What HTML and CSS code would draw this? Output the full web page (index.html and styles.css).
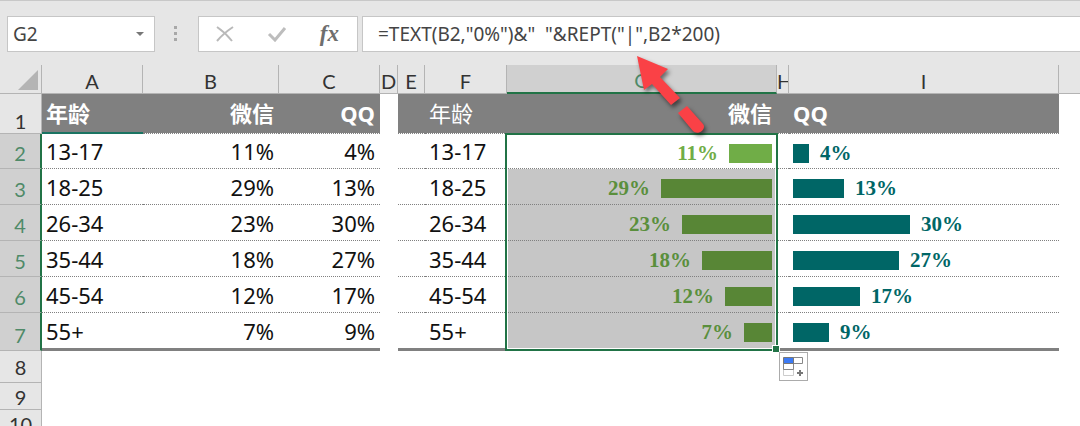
FILE: index.html
```
<!DOCTYPE html>
<html lang="zh-CN">
<head>
  <meta charset="UTF-8">
  <title>Excel</title>
  <link rel="stylesheet" href="styles.css">
</head>
<body>
  <div class="formula-bar">
    <div class="name-box">
      <input type="text" class="name-input" value="G2" aria-label="Name Box">
      <button type="button" class="name-drop" aria-label="Open name list">
        <svg width="8" height="4" viewBox="0 0 8 4"><path d="M0 0h8L4 4z" fill="#777"/></svg>
      </button>
    </div>
    <svg class="grip" width="4" height="16" viewBox="0 0 4 16" fill="#a8a8a8"><path d="M0 0h3v3H0zM0 6h3v3H0zM0 12h3v3H0z"/></svg>
    <div class="tools">
      <button type="button" aria-label="Cancel">
        <svg width="18" height="16" viewBox="0 0 18 16" fill="none" stroke="#b9b9b9" stroke-width="2"><path d="M1 1c6 4 11 9 15 14M17 1C11 5 6 9 1 15"/></svg>
      </button>
      <button type="button" aria-label="Enter">
        <svg width="20" height="16" viewBox="0 0 20 16" fill="none" stroke="#bdbdbd" stroke-width="3"><path d="M2 8l6 6L18 2"/></svg>
      </button>
      <button type="button" class="fx" aria-label="Insert Function">fx</button>
    </div>
    <input type="text" class="formula" aria-label="Formula" value="=TEXT(B2,&quot;0%&quot;)&amp;&quot;  &quot;&amp;REPT(&quot;|&quot;,B2*200)">
  </div>

  <table class="sheet">
    <colgroup>
      <col class="col-head"><col class="col-a"><col class="col-b"><col class="col-a"><col class="col-d"><col class="col-e"><col class="col-f"><col class="col-chart"><col class="col-h"><col class="col-chart"><col>
    </colgroup>
    <thead>
      <tr>
        <th class="corner"><svg width="20" height="20" viewBox="0 0 20 20"><path d="M20 0v20H0z" fill="#b4b4b4"/></svg></th>
        <th>A</th><th>B</th><th>C</th><th>D</th><th>E</th><th>F</th><th class="active">G</th><th>H</th><th>I</th><th class="last"></th>
      </tr>
    </thead>
    <tbody>
      <tr class="title">
        <th>1</th>
        <td class="bold linked">年龄</td><td class="num bold">微信</td><td class="num bold">QQ</td>
        <td class="gap"></td>
        <td></td><td>年龄</td><td class="num bold">微信</td><td></td><td class="bold">QQ</td><td class="gap"></td>
      </tr>
      <tr class="data first">
        <th>2</th>
        <td>13-17</td><td class="num">11%</td><td class="num">4%</td>
        <td class="gap"></td>
        <td></td><td>13-17</td>
        <td class="wechat">
          <div class="chart"><span>11%</span><i class="bar" style="width: 43px"></i></div>
          <div class="selection">
            <span class="handle"></span>
            <button type="button" class="autofill" aria-label="Auto Fill Options">
              <svg width="21" height="20" viewBox="0 0 21 20" fill="none">
                <path d="M.5 12v6.500h10V12" stroke="#ccc"/>
                <path d="M.5 6.500h10v6H.5zM10.500.5h9v6h-9z" stroke="#888"/>
                <path d="M.5.5h10v6H.5z" fill="#3d7bf5" stroke="#777"/>
                <path d="M17 13v6M14 16h6" stroke="#777" stroke-width="2"/>
              </svg>
            </button>
          </div>
        </td>
        <td></td>
        <td class="qq"><div class="chart"><i class="bar" style="width: 16px"></i><span>4%</span></div></td>
        <td class="gap"></td>
      </tr>
      <tr class="data">
        <th>3</th>
        <td>18-25</td><td class="num">29%</td><td class="num">13%</td>
        <td class="gap"></td>
        <td></td><td>18-25</td>
        <td class="wechat picked"><div class="chart"><span>29%</span><i class="bar" style="width: 111px"></i></div></td>
        <td></td>
        <td class="qq"><div class="chart"><i class="bar" style="width: 51px"></i><span>13%</span></div></td>
        <td class="gap"></td>
      </tr>
      <tr class="data">
        <th>4</th>
        <td>26-34</td><td class="num">23%</td><td class="num">30%</td>
        <td class="gap"></td>
        <td></td><td>26-34</td>
        <td class="wechat picked"><div class="chart"><span>23%</span><i class="bar" style="width: 90px"></i></div></td>
        <td></td>
        <td class="qq"><div class="chart"><i class="bar" style="width: 117px"></i><span>30%</span></div></td>
        <td class="gap"></td>
      </tr>
      <tr class="data">
        <th>5</th>
        <td>35-44</td><td class="num">18%</td><td class="num">27%</td>
        <td class="gap"></td>
        <td></td><td>35-44</td>
        <td class="wechat picked"><div class="chart"><span>18%</span><i class="bar" style="width: 70px"></i></div></td>
        <td></td>
        <td class="qq"><div class="chart"><i class="bar" style="width: 106px"></i><span>27%</span></div></td>
        <td class="gap"></td>
      </tr>
      <tr class="data">
        <th>6</th>
        <td>45-54</td><td class="num">12%</td><td class="num">17%</td>
        <td class="gap"></td>
        <td></td><td>45-54</td>
        <td class="wechat picked"><div class="chart"><span>12%</span><i class="bar" style="width: 47px"></i></div></td>
        <td></td>
        <td class="qq"><div class="chart"><i class="bar" style="width: 67px"></i><span>17%</span></div></td>
        <td class="gap"></td>
      </tr>
      <tr class="data end">
        <th>7</th>
        <td>55+</td><td class="num">7%</td><td class="num">9%</td>
        <td class="gap"></td>
        <td></td><td>55+</td>
        <td class="wechat picked"><div class="chart"><span>7%</span><i class="bar" style="width: 28px"></i></div></td>
        <td></td>
        <td class="qq"><div class="chart"><i class="bar" style="width: 36px"></i><span>9%</span></div></td>
        <td class="gap"></td>
      </tr>
      <tr class="empty tall"><th>8</th><td colspan="10"></td></tr>
      <tr class="empty"><th>9</th><td colspan="10"></td></tr>
      <tr class="empty"><th>10</th><td colspan="10"></td></tr>
    </tbody>
  </table>

  <!-- callout arrow pointing at the formula -->
  <svg class="arrow" width="76" height="84" viewBox="0 0 76 84" fill="#fa4146">
    <path d="M1 0l31 13-8 8 20 21-9 7-19-21-8 6z"/>
    <path d="M51 50l16 18c4 5-5 12-10 7L42 57z"/>
  </svg>
</body>
</html>
```
FILE: styles.css
```
* { box-sizing: border-box; }
body { margin: 0; height: 100vh; overflow: hidden; position: relative; background: #fff; font-family: "Noto Sans", "Noto Sans CJK SC", sans-serif; }
button { padding: 0; border: none; background: none; }
svg { display: block; }

/* formula bar */
.formula-bar { display: flex; align-items: center; height: 65px; padding: 2px 0 0 7px; background: #e6e6e6; border-top: 1px solid #c8c8c8; }
.name-box { display: flex; align-items: center; width: 148px; height: 36px; padding-right: 10px; background: #fff; border: 1px solid #c6c6c6; }
.name-input { flex: 1; min-width: 0; padding: 0 0 0 5px; border: none; font: 19px "Noto Sans", sans-serif; color: #444; }
.grip { margin: 0 20px 0 19px; }
.tools { display: flex; align-items: center; justify-content: space-between; width: 160px; height: 36px; padding: 0 18px 0 17px; background: #fff; border: 1px solid #c6c6c6; }
.fx { font: italic bold 23px/28px "Liberation Serif", serif; color: #6e6e6e; }
.formula { flex: 1; min-width: 0; height: 36px; margin-left: 4px; padding: 0 0 0 15px; border: 1px solid #c6c6c6; border-right: none; font: 19px "Noto Sans", sans-serif; color: #444; }

/* grid */
.sheet { width: 100%; table-layout: fixed; border-collapse: separate; border-spacing: 0; font-size: 22px; line-height: 28px; color: #111; }
.col-head { width: 42px; }
.col-a { width: 101px; }
.col-b { width: 136px; }
.col-d { width: 18px; }
.col-e { width: 27px; }
.col-f { width: 82px; }
.col-h { width: 12px; }
.col-chart { width: 25%; }

th { padding: 0; background: #e6e6e6; border-right: 1px solid #b4b4b4; border-bottom: 1px solid #b4b4b4; font: 20px/24px Lato, sans-serif; color: #333; vertical-align: bottom; overflow: hidden; }
thead th { height: 29px; }
thead .corner { padding: 0 0 3px 18px; }
thead .active { background: #d0d0d0; border-bottom: 2px solid #217346; color: #4f8a68; }
thead .last { border-right: none; }

td { height: 36px; padding: 0 4px; vertical-align: middle; white-space: nowrap; border-bottom: 1px dotted #808080; }
.num { padding-right: 5px; text-align: right; }
.bold { font-weight: bold; }
.gap { border-bottom: none; }

.title td { height: 40px; padding-bottom: 2px; background: #808080 padding-box; color: #fff; }
.title .gap { background: none; }
.title .linked { padding-bottom: 1px; border-bottom: 2px solid #1a7462; }

.data th { padding-bottom: 3px; background: #d0d0d0; border-right: 2px solid #217346; color: #4f8a68; }
.first td { height: 35px; }
.end td { height: 38px; border-bottom: 3px solid #808080; }
.end .gap { border-bottom: none; }

.empty td { height: 27px; border: none; }
.tall td { height: 32px; }
.tall th { padding-bottom: 3px; }

/* in-cell bars */
.chart { display: flex; align-items: center; gap: 11px; height: 19px; font: bold 21px/19px "Liberation Serif", serif; }
.bar { height: 19px; }
.wechat, .qq { padding-top: 4px; }
.wechat { position: relative; padding-right: 5px; color: #5a8f3c; }
.wechat .chart { justify-content: flex-end; }
.wechat .bar { background: #588636; }
.first .wechat { color: #70ad47; }
.first .wechat .bar { background: #70ad47; }
.picked { background: #c6c6c6; }
.qq { color: #006666; }
.qq .bar { background: #006666; }

/* selected range G2:G7 */
.selection { position: absolute; top: -1px; left: -2px; right: -1px; height: 218px; border: 2px solid #217346; box-shadow: inset 0 0 0 1px #fff; z-index: 1; }
.handle { position: absolute; right: -4px; bottom: -4px; width: 8px; height: 8px; background: #217346; border: 1px solid #fff; }
.autofill { position: absolute; left: 100%; top: 100%; width: 29px; height: 29px; margin: 3px 0 0 3px; padding: 1px 3px; background: #fff; border: 1px solid #ababab; }

.arrow { position: absolute; left: 636px; top: 56px; z-index: 2; filter: drop-shadow(2px 3px 2px rgba(0, 0, 0, 0.5)); }
```
